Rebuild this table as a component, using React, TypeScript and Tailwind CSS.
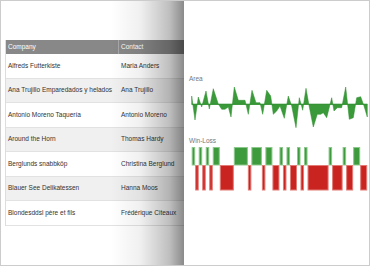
const rows = [
  { company: 'Alfreds Futterkiste', contact: 'Maria Anders' },
  { company: 'Ana Trujillo Emparedados y helados', contact: 'Ana Trujillo' },
  { company: 'Antonio Moreno Taquería', contact: 'Antonio Moreno' },
  { company: 'Around the Horn', contact: 'Thomas Hardy' },
  { company: 'Berglunds snabbköp', contact: 'Christina Berglund' },
  { company: 'Blauer See Delikatessen', contact: 'Hanna Moos' },
  { company: 'Blondesddsl père et fils', contact: 'Frédérique Citeaux' },
];

// screen coords of the area chart outline
const area: [number, number][] = [
  [191.7, 103.3], [191.7, 95], [195, 119], [198.3, 96], [201.7, 106], [206, 90], [209.3, 108],
  [213.3, 87.7], [218.3, 103], [221.7, 108.3], [225, 108.3], [228.3, 106], [231, 116],
  [234.3, 86], [238.3, 99.3], [245, 99.3], [248.3, 113.3], [252, 89.3], [256, 101.7],
  [260, 101.7], [262.7, 113.3], [266.7, 89.3], [270.7, 95], [273.3, 113.3], [276.7, 110],
  [280, 105], [284.3, 117.3], [288.3, 95], [291.7, 105], [296, 126.7], [299.3, 96.7],
  [302.7, 109.3], [306, 87.3], [309.3, 106], [313.3, 126], [317.3, 113.3], [320.7, 113.3],
  [323.3, 111.7], [326.7, 116.7], [331.7, 96.7], [334, 110], [337.3, 106.7], [341.7, 106.7],
  [345.7, 86], [349.3, 118.3], [353.3, 116.7], [356.7, 96.7], [360.7, 95.7], [364, 105],
  [367.3, 116], [367.3, 103.3],
];

// win (+) / loss (-) runs, in units
const runs = [1, -1, 1, -1, 1, -1, 2, -4, 4, -1, 3, -1, 2, -2, 1, -1, 1, -2, 1, -1, 1, -6, 1, -3, 1, -2, 2, -2];

function AreaChart() {
  const d = area.map(([x, y], i) => `${i ? 'L' : 'M'}${(x - 186).toFixed(1)} ${(y - 82).toFixed(1)}`).join(' ') + ' Z';
  return (
    <svg width="182" height="48" className="block">
      <path d={d} fill="#3a9a3a" stroke="#2f8f2f" strokeWidth="0.5" />
      <line x1="5.7" y1="21.3" x2="181.3" y2="21.3" stroke="#2f8f2f" strokeWidth="1" />
    </svg>
  );
}

function WinLoss() {
  const unit = 3.51;
  let x = 5.7;
  const bars = runs.map((r, i) => {
    const w = Math.abs(r) * unit;
    const bx = x;
    x += w;
    const win = r > 0;
    return (
      <rect
        key={i}
        x={bx + 0.5}
        y={win ? 2.5 : 20.5}
        width={w - 1}
        height={win ? 17.5 : 24.5}
        fill={win ? '#3d9b3d' : '#c92420'}
        stroke={win ? '#8cc78c' : '#e27a76'}
        strokeWidth="1"
      />
    );
  });
  return (
    <svg width="182" height="48" className="block">
      {bars}
    </svg>
  );
}

export default function App() {
  return (
    <div className="w-[370px] h-[266px] border border-[#cccccc] bg-white flex overflow-hidden font-['Liberation_Sans',Arial,sans-serif]">
      <div className="relative w-[183px] h-full pt-[39px] pl-[4px] overflow-hidden">
        <div className="w-[200px] border-l border-[#dddddd]">
          <div className="flex h-[14px] items-center bg-[#888888] text-white text-[6.5px]">
            <div className="w-[113px] pl-[2px] border-r border-[#a8a8a8] h-full flex items-center">Company</div>
            <div className="pl-[2px]">Contact</div>
          </div>
          {rows.map((r, i) => (
            <div
              key={i}
              className={`flex h-[24.5px] items-center text-[6.5px] text-[#333333] border-b border-[#e2e2e2] ${i % 2 ? 'bg-[#f0f0f0]' : 'bg-white'}`}
            >
              <div className="w-[113px] pl-[2px]">{r.company}</div>
              <div className="pl-[2px]">{r.contact}</div>
            </div>
          ))}
        </div>
        <div className="absolute inset-0 bg-[linear-gradient(to_right,rgba(0,0,0,0)_60%,rgba(0,0,0,0.06)_76%,rgba(0,0,0,0.25)_92%,rgba(0,0,0,0.46)_100%)]" />
      </div>
      <div className="flex-1 bg-white pt-[73px] pl-[2px] flex flex-col">
        <div className="pl-[3px] h-[9px] leading-[9px] text-[6.5px] text-[#777777]">Area</div>
        <AreaChart />
        <div className="mt-[5px] pl-[3px] h-[9px] leading-[9px] text-[6.5px] text-[#777777]">Win-Loss</div>
        <WinLoss />
      </div>
    </div>
  );
}
